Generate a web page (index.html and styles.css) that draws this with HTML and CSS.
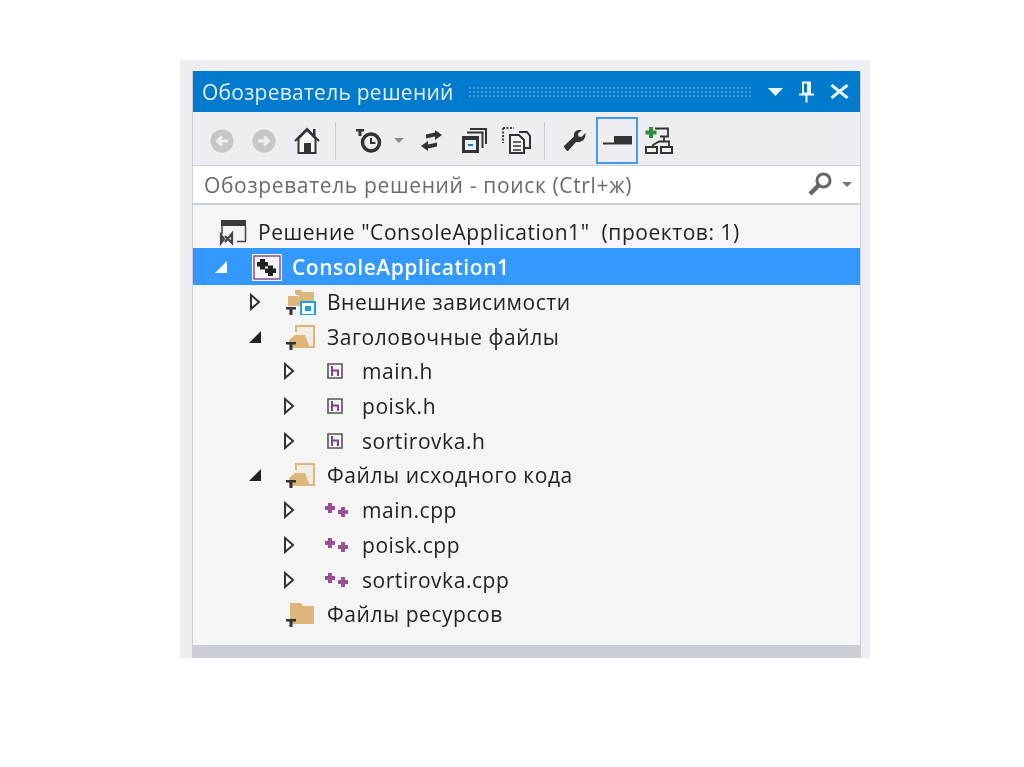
FILE: index.html
```html
<!DOCTYPE html>
<html lang="ru">
<head>
<meta charset="utf-8">
<title>Обозреватель решений</title>
<link rel="stylesheet" href="styles.css">
</head>
<body>
<div class="frame">
  <div class="panel">
    <header class="title">
      <span class="title-text">Обозреватель решений</span>
      <span class="grip"></span>
      <svg class="tb" width="15" height="8" viewBox="0 0 15 8"><path d="M0 0h15L7.500 8z" fill="#f0f7fc"/></svg>
      <svg class="tb" width="15" height="22" viewBox="0 0 15 22"><path d="M4 1.500h7v11H4zM0 13.500h15M7.500 13.500v8M9 2v10" fill="none" stroke="#f0f7fc" stroke-width="2"/></svg>
      <svg class="tb" width="19" height="15" viewBox="0 0 19 15"><path d="M1.500 1l16 13M17.500 1l-16 13" stroke="#e4f1fa" stroke-width="3" fill="none"/></svg>
    </header>
    <div class="toolbar">
      <svg class="ic-back" width="24" height="24" viewBox="0 0 24 24"><circle cx="12" cy="12" r="11.500" fill="#c6c6c8"/><path d="M18 12H8M12 7.500L7.500 12l4.500 4.500" stroke="#eeeef2" stroke-width="3" fill="none"/></svg>
      <svg class="ic-fwd" width="24" height="24" viewBox="0 0 24 24"><circle cx="12" cy="12" r="11.500" fill="#c6c6c8"/><path d="M6 12h10M12 7.500l4.500 4.500-4.500 4.500" stroke="#eeeef2" stroke-width="3" fill="none"/></svg>
      <svg class="ic-home" width="26" height="27" viewBox="0 0 26 27"><path d="M1 14L13 2l12 12" fill="none" stroke="#333" stroke-width="2"/><path d="M4.500 11.500V26h17V11.500L13 3z" fill="#f7f7f7" stroke="#333" stroke-width="2"/><path d="M10 16h7v10h-7z" fill="#333"/><path d="M19 2h2.500v7H19z" fill="#333"/></svg>
      <span class="sep sep-a"></span>
      <svg class="ic-clock" width="26" height="24" viewBox="0 0 26 24"><path d="M0 0h8v2.500H5.500V7h-3V2.500H0z" fill="#333"/><circle cx="15" cy="13.500" r="8.500" fill="#eeeef2" stroke="#333" stroke-width="3.500"/><path d="M15 9v5h4.500" stroke="#333" stroke-width="2" fill="none"/></svg>
      <svg class="caret" width="10" height="5" viewBox="0 0 10 5"><path d="M0 0h10L5 5z" fill="#8c8c8c"/></svg>
      <svg class="ic-swap" width="21" height="21" viewBox="0 0 21 21"><path d="M21 5l-7-5v2.500L5 4.500v4l9-2V10zM0 16l7 5v-2.500l9-2v-4l-9 2V11z" fill="#333"/></svg>
      <svg class="ic-stack" width="25" height="25" viewBox="0 0 25 25"><path d="M8 1h16v15M5 4.500h15.500V20" fill="none" stroke="#333" stroke-width="2"/><path d="M0 8h17v17H0z" fill="#333"/><path d="M3 12h11v10H3z" fill="#eaf2f9"/><path d="M6 16h5v2H6z" fill="#2a6fc0"/></svg>
      <svg class="ic-copy" width="29" height="27" viewBox="0 0 29 27"><path d="M1 1h11M1 1v15" fill="none" stroke="#444" stroke-width="2" stroke-dasharray="2 1.500"/><path d="M17 5h8l3 4v12h-6" fill="none" stroke="#333" stroke-width="2"/><path d="M8 8h9l5 5v13H8z" fill="#f4f4f4" stroke="#333" stroke-width="2"/><path d="M11 15h8M11 19h8M11 23h8" stroke="#333" stroke-width="1.600"/></svg>
      <span class="sep sep-b"></span>
      <svg class="ic-wrench" width="22" height="21" viewBox="0 0 22 21"><path d="M21.500 3l-4 4-3-.5-.5-3 4-3.500c-4-1-9 1-8 6.500L0 16v1l3 4h1l8-9c6 1 10-3 9.500-9z" fill="#333"/></svg>
      <span class="toggled"><svg width="29" height="9" viewBox="0 0 29 9"><path d="M0 7.500h29" stroke="#333" stroke-width="2"/><path d="M11 0h18v8H11z" fill="#333"/></svg></span>
      <svg class="ic-net" width="28" height="27" viewBox="0 0 28 27"><path d="M10 1.500h13v8h-8M19 9.500v5M8 20v-2l6-3.500h10l0 5.500" fill="none" stroke="#333" stroke-width="1.800"/><path d="M1 20h11v6H1zM16 20h11v6H16z" fill="#f4f4f4" stroke="#333" stroke-width="2"/><path d="M4 0h4v3.500h3.500v4H8V11H4V7.500H.500v-4H4z" fill="#2e8b3d"/></svg>
    </div>
    <div class="search">
      <span class="search-text">Обозреватель решений - поиск (Ctrl+ж)</span>
      <svg width="26" height="25" viewBox="0 0 26 25"><circle cx="16.500" cy="8.500" r="6.500" fill="#fff" stroke="#666" stroke-width="3"/><path d="M11.500 13.500L3 22" stroke="#666" stroke-width="4.500"/></svg>
      <svg class="search-caret" width="10" height="5" viewBox="0 0 10 5"><path d="M0 0h10L5 5z" fill="#777"/></svg>
    </div>
    <ul class="tree">
      <li class="row l0 solution">
        <span class="arrow"></span>
        <svg class="node" width="28" height="27" viewBox="0 0 28 27"><path d="M2 1h25v6H2z" fill="#3a3a3a"/><path d="M3 7v8M26.500 7v15.500M18 22.500h9" stroke="#444" stroke-width="1.500" fill="none"/><path d="M2 16l3 4-3 4zM6 17l7 7V14.500L6 23" stroke="#444" stroke-width="2.200" fill="none"/></svg>
        <span>Решение "ConsoleApplication1"&nbsp; (проектов: 1)</span>
      </li>
      <li class="row l0 selected">
        <svg class="arrow" width="14" height="14" viewBox="0 0 14 14"><path d="M13 1v12H1z" fill="#f4faff"/></svg>
        <svg class="node" width="30" height="27" viewBox="0 0 30 27"><path d="M0 0h30v27H0z" fill="#f5f5f5"/><path d="M2 2h26v23H2z" fill="#f3f3f3" stroke="#80508f" stroke-width="1.500"/><path d="M8 5h5v3h3v4.500h-3v3H8v-3H5V8h3zM16 11.500h5v3h3V19h-3v3h-5v-3h-3v-4.500h3z" fill="#222"/></svg>
        <strong>ConsoleApplication1</strong>
      </li>
      <li class="row l1">
        <svg class="arrow" width="12" height="18" viewBox="0 0 12 18"><path d="M2 2l8 7-8 7z" fill="#fff" stroke="#333" stroke-width="2"/></svg>
        <svg class="node" width="30" height="26" viewBox="0 0 30 26"><path d="M9 5V1h6l1 2h12v9H13V7z" fill="#dcb67a"/><path d="M2 17V7h10l2 3v7z" fill="#dcb67a"/><path d="M15 13h14v13H15z" fill="#fff" stroke="#1ba1e2" stroke-width="2"/><path d="M19 17h6v5h-6z" fill="#1ba1e2"/><path d="M0 18h10v2.500H6.500V26h-3v-5.500H0z" fill="#333"/></svg>
        <span>Внешние зависимости</span>
      </li>
      <li class="row l1">
        <svg class="arrow" width="14" height="14" viewBox="0 0 14 14"><path d="M13 1v12H1z" fill="#222"/></svg>
        <svg class="node" width="30" height="26" viewBox="0 0 30 26"><path d="M10 8V2h18v21H8" fill="#f0ece4" stroke="#dcb67a" stroke-width="2"/><path d="M3 24v-8l6-5h10l5 13z" fill="#dcb67a"/><path d="M0 18h10v2.500H6.500V26h-3v-5.500H0z" fill="#333"/></svg>
        <span>Заголовочные файлы</span>
      </li>
      <li class="row l2">
        <svg class="arrow" width="12" height="18" viewBox="0 0 12 18"><path d="M2 2l8 7-8 7z" fill="#fff" stroke="#333" stroke-width="2"/></svg>
        <svg class="hfile" width="16" height="16" viewBox="0 0 16 16"><path d="M1 1h14v14H1z" fill="#f5f5f5" stroke="#555" stroke-width="1.600"/><path d="M5 3v10M5 7.500h6V13" fill="none" stroke="#80408f" stroke-width="2"/></svg>
        <span>main.h</span>
      </li>
      <li class="row l2">
        <svg class="arrow" width="12" height="18" viewBox="0 0 12 18"><path d="M2 2l8 7-8 7z" fill="#fff" stroke="#333" stroke-width="2"/></svg>
        <svg class="hfile" width="16" height="16" viewBox="0 0 16 16"><path d="M1 1h14v14H1z" fill="#f5f5f5" stroke="#555" stroke-width="1.600"/><path d="M5 3v10M5 7.500h6V13" fill="none" stroke="#80408f" stroke-width="2"/></svg>
        <span>poisk.h</span>
      </li>
      <li class="row l2">
        <svg class="arrow" width="12" height="18" viewBox="0 0 12 18"><path d="M2 2l8 7-8 7z" fill="#fff" stroke="#333" stroke-width="2"/></svg>
        <svg class="hfile" width="16" height="16" viewBox="0 0 16 16"><path d="M1 1h14v14H1z" fill="#f5f5f5" stroke="#555" stroke-width="1.600"/><path d="M5 3v10M5 7.500h6V13" fill="none" stroke="#80408f" stroke-width="2"/></svg>
        <span>sortirovka.h</span>
      </li>
      <li class="row l1">
        <svg class="arrow" width="14" height="14" viewBox="0 0 14 14"><path d="M13 1v12H1z" fill="#222"/></svg>
        <svg class="node" width="30" height="26" viewBox="0 0 30 26"><path d="M10 8V2h18v21H8" fill="#f0ece4" stroke="#dcb67a" stroke-width="2"/><path d="M3 24v-8l6-5h10l5 13z" fill="#dcb67a"/><path d="M0 18h10v2.500H6.500V26h-3v-5.500H0z" fill="#333"/></svg>
        <span>Файлы исходного кода</span>
      </li>
      <li class="row l2">
        <svg class="arrow" width="12" height="18" viewBox="0 0 12 18"><path d="M2 2l8 7-8 7z" fill="#fff" stroke="#333" stroke-width="2"/></svg>
        <svg class="cpp" width="23" height="14" viewBox="0 0 23 14"><path d="M3 0h4v3h3v4H7v3H3V7H0V3h3zM16 4h4v3h3v4h-3v3h-4v-3h-3V7h3z" fill="#9b4f96"/></svg>
        <span>main.cpp</span>
      </li>
      <li class="row l2">
        <svg class="arrow" width="12" height="18" viewBox="0 0 12 18"><path d="M2 2l8 7-8 7z" fill="#fff" stroke="#333" stroke-width="2"/></svg>
        <svg class="cpp" width="23" height="14" viewBox="0 0 23 14"><path d="M3 0h4v3h3v4H7v3H3V7H0V3h3zM16 4h4v3h3v4h-3v3h-4v-3h-3V7h3z" fill="#9b4f96"/></svg>
        <span>poisk.cpp</span>
      </li>
      <li class="row l2">
        <svg class="arrow" width="12" height="18" viewBox="0 0 12 18"><path d="M2 2l8 7-8 7z" fill="#fff" stroke="#333" stroke-width="2"/></svg>
        <svg class="cpp" width="23" height="14" viewBox="0 0 23 14"><path d="M3 0h4v3h3v4H7v3H3V7H0V3h3zM16 4h4v3h3v4h-3v3h-4v-3h-3V7h3z" fill="#9b4f96"/></svg>
        <span>sortirovka.cpp</span>
      </li>
      <li class="row l1">
        <span class="arrow"></span>
        <svg class="node" width="30" height="26" viewBox="0 0 30 26"><path d="M4 20V2h11l2 3h11v18H6z" fill="#dcb67a"/><path d="M0 18h10v2.500H6.500V26h-3v-5.500H0z" fill="#333"/></svg>
        <span>Файлы ресурсов</span>
      </li>
    </ul>
    <div class="status"></div>
  </div>
</div>
</body>
</html>
```
FILE: styles.css
```css
* { box-sizing: border-box; }
html, body { margin: 0; height: 100%; background: #fff; }
body { font-family: "Open Sans", "Noto Sans", sans-serif; color: #222; padding: 60px 154px 0 180px; overflow: hidden; }
.frame { background: #eeeef2; height: 598px; padding: 11px 9px 0 12px; }
.panel { height: 587px; display: flex; flex-direction: column; background: #f5f5f5; border-left: 1px solid #ccced8; border-right: 1px solid #ccced8; filter: blur(.35px); }
.title { height: 41px; flex: none; background: #007acc; color: #fff; display: flex; align-items: center; padding: 0 11px 0 9px; }
.title-text { font-size: 21px; letter-spacing: .25px; color: #e4f1fa; }
.grip { flex: 1; height: 12px; margin: 0 0 0 14px; background-image: radial-gradient(circle, #3f9bd8 .8px, transparent 1px); background-size: 4px 4px; }
.tb { margin-left: 16px; flex: none; }
.toolbar { height: 53px; flex: none; background: #eeeef2; display: flex; align-items: center; padding: 4px 0 0 17px; }
.toolbar svg { flex: none; }
.ic-fwd { margin-left: 18px; }
.ic-home { margin-left: 18px; }
.sep { width: 1px; height: 38px; background: #ccced8; }
.sep-a { margin-left: 15px; }
.ic-clock { margin-left: 20px; }
.caret { margin-left: 12px; }
.ic-swap { margin-left: 17px; }
.ic-stack { margin-left: 20px; }
.ic-copy { margin-left: 15px; }
.sep-b { margin-left: 13px; }
.ic-wrench { margin-left: 19px; }
.toggled { width: 42px; height: 47px; margin-left: 10px; border: 2px solid #3f9bf0; display: flex; align-items: center; justify-content: center; }
.ic-net { margin-left: 7px; }
.search { height: 40px; flex: none; background: #fff; border-top: 1px solid #ccced8; border-bottom: 2px solid #ccced8; display: flex; align-items: center; padding: 0 8px 0 11px; }
.search-text { flex: 1; font-size: 21px; letter-spacing: .65px; color: #6a6a6a; }
.search-caret { margin-left: 9px; }
.tree { list-style: none; margin: 0; padding: 8px 0 0; flex: 1; }
.row { height: 34.700px; display: flex; align-items: center; font-size: 21px; letter-spacing: .55px; white-space: nowrap; }
.row strong { font-weight: 600; color: #fff; }
.solution { padding-top: 3px; }
.solution .node { margin-top: 2px; }
.selected { background: #3399ff; height: 37px; padding-top: 2px; }
.arrow { flex: none; }
.l0 .arrow { margin-left: 21px; width: 14px; }
.l0 .node { margin-left: -9px; }
.l0 > span:last-child { margin-left: 11px; }
.selected .node { margin: 0 0 0 24px; }
.selected strong { margin-left: 10px; }
.l1 .arrow { margin-left: 55px; width: 14px; }
.l1 .node { margin-left: 24px; }
.l1 > span:last-child { margin-left: 11px; }
.l2 .arrow { margin-left: 90px; width: 12px; }
.hfile { margin-left: 32px; }
.hfile + span { margin-left: 19px; }
.cpp { margin-left: 30px; }
.cpp + span { margin-left: 14px; }
.status { height: 13px; flex: none; background: #ccced8; }
```
